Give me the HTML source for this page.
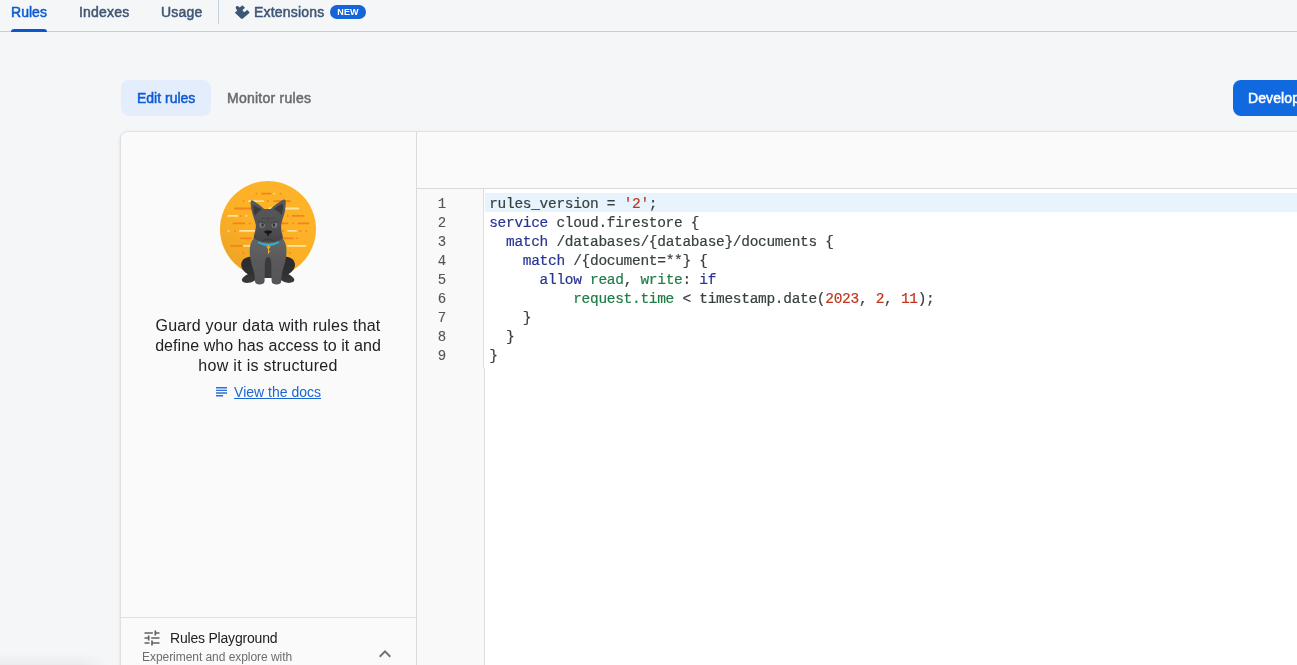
<!DOCTYPE html>
<html>
<head>
<meta charset="utf-8">
<style>
*{box-sizing:border-box;margin:0;padding:0}
html,body{width:1297px;height:665px;overflow:hidden}
body{background:#f4f6f8;font-family:"Liberation Sans",sans-serif;position:relative;color:#202124}
.abs{position:absolute}
.tabbar{position:absolute;left:0;top:0;width:1297px;height:32px;border-bottom:1px solid #c2cfdd}
.tab{position:absolute;top:4px;font-size:14px;line-height:16px;color:#3f5675;white-space:nowrap;-webkit-text-stroke:0.5px currentColor;letter-spacing:.2px}
.tab.sel{color:#0d5bd3}
.ul{position:absolute;left:11px;top:29px;width:36px;height:3px;background:#0b57d0;border-radius:3px 3px 0 0}
.sep{position:absolute;left:218px;top:0;width:1px;height:24px;background:#c2cfdd}
.new{position:absolute;left:330px;top:5px;width:36px;height:14px;border-radius:7px;background:#1565d8;color:#fff;font-size:9px;line-height:14px;text-align:center;font-weight:bold;letter-spacing:.1px}
.btn1{position:absolute;left:121px;top:80px;width:90px;height:36px;border-radius:8px;background:#e4edfc}
.t14{position:absolute;font-size:14px;line-height:16px;white-space:nowrap;-webkit-text-stroke:0.5px currentColor;letter-spacing:.1px}
.dev{position:absolute;left:1233px;top:80px;width:80px;height:36px;border-radius:8px;background:#1169e0}
.panel{position:absolute;left:120px;top:131px;width:1200px;height:560px;background:#fafafa;border:1px solid #e0e0e0;border-radius:8px 0 0 0;box-shadow:0 1px 3px rgba(0,0,0,.12);overflow:hidden}
.left{position:absolute;left:0;top:0;width:296px;height:560px;border-right:1px solid #dbdbdb;background:#fafafa}
.toolbar{position:absolute;left:296px;top:0;width:910px;height:57px;border-bottom:1px solid #dadada;background:#fafafa}
.editor{position:absolute;left:296px;top:57px;width:910px;height:520px;background:#fff}
.gutter{position:absolute;left:0;top:0;width:67px;height:520px;border-right:1px solid #dedede;background:#f9f9f9}
.hl{position:absolute;left:68px;top:4px;width:850px;height:19px;background:#e7f3fd}
.ln{position:absolute;left:20.800px;width:10px;font-family:"Liberation Mono",monospace;font-size:14px;line-height:19px;color:#555;-webkit-text-stroke:0.1px currentColor}
.code{position:absolute;left:72.200px;top:6px;font-family:"Liberation Mono",monospace;font-size:14.500px;letter-spacing:-.3px;line-height:19px;white-space:pre;color:#37413e;-webkit-text-stroke:0.2px currentColor}
.k{color:#283593}.g{color:#1e7d45}.r{color:#c0341d}
.guard{position:absolute;left:0;top:184px;width:294px;text-align:center;font-size:16px;line-height:20px;color:#202124;letter-spacing:.2px}
.docs{position:absolute;left:113.100px;top:252.400px;font-size:14px;line-height:16px;color:#1a67d2;text-decoration:underline;white-space:nowrap}
.pg{position:absolute;left:0;top:485px;width:295px;height:80px;border-top:1px solid #e0e0e0}
</style>
</head>
<body><div id="root" style="position:absolute;left:0;top:0;width:1297px;height:665px;will-change:transform">
<div class="tabbar">
  <div class="tab sel" style="left:11.100px;letter-spacing:0">Rules</div>
  <div class="tab" style="left:79px">Indexes</div>
  <div class="tab" style="left:161px">Usage</div>
  <div class="sep"></div>
  <div class="tab" style="left:254px">Extensions</div>
  <div class="new">NEW</div>
  <div class="ul"></div>
</div>
<div class="btn1"></div>
<div class="t14" style="left:137px;top:90px;color:#0e5cd3;letter-spacing:0">Edit rules</div>
<div class="t14" style="left:227px;top:90px;color:#6a6a6c;letter-spacing:.25px">Monitor rules</div>
<div class="dev"></div>
<div class="t14" style="left:1248px;top:90px;color:#fff">Develop</div>

<div class="panel">
  <div class="left">
    <div class="guard">Guard your data with rules that<br><span style="letter-spacing:.08px">define who has access to it and</span><br><span style="letter-spacing:.3px">how it is structured</span></div>
    <div class="docs">View the docs</div>
    <div class="pg">
      <div class="abs" style="left:49px;top:12px;font-size:14px;line-height:16px;color:#202124;white-space:nowrap;letter-spacing:-.2px">Rules Playground</div>
      <div class="abs" style="left:21px;top:32px;font-size:12px;line-height:14px;color:#6b6e72;white-space:nowrap;letter-spacing:-.05px">Experiment and explore with</div>
    </div>
  </div>
  <div class="toolbar"></div>
  <div class="editor">
    <div class="gutter" style="height:179px"></div><div class="gutter" style="top:179px;width:68px;height:400px"></div>
    <div class="hl"></div>
    <div class="ln" style="top:5.900px">1<br>2<br>3<br>4<br>5<br>6<br>7<br>8<br>9</div>
<div class="code">rules_version = <span class="r">'2'</span>;
<span class="k">service</span> cloud.firestore {
  <span class="k">match</span> /databases/{database}/documents {
    <span class="k">match</span> /{document=**} {
      <span class="k">allow</span> <span class="g">read</span>, <span class="g">write</span>: <span class="k">if</span>
          <span class="g">request.time</span> &lt; timestamp.date(<span class="r">2023</span>, <span class="r">2</span>, <span class="r">11</span>);
    }
  }
}</div>
  </div>
</div>
<!--ICONS-->
<svg class="abs" style="left:228px;top:0" width="30" height="24" viewBox="228 0 30 24"><path d="M235.040 12.450L237.200 10.470L236.100 8.840C235.500 7.900 235.600 7.000 236.300 6.400C237.000 5.700 238.000 5.800 238.700 6.500L239.550 7.400L241.900 5.700C242.200 5.400 242.600 5.400 242.900 5.700L244.600 7.300C244.900 7.600 244.900 7.900 244.600 8.200L243.300 9.300C242.600 10.000 242.600 10.700 243.100 11.300C243.700 12.000 244.600 12.100 245.300 11.550L246.700 10.300C247.000 10.000 247.300 10.000 247.600 10.300L249.300 12.000C249.600 12.300 249.600 12.600 249.300 12.900L243.200 18.200C242.400 18.900 241.400 18.900 240.700 18.200L235.100 13.100C234.900 12.900 234.900 12.600 235.040 12.450Z" fill="#3d5777"/></svg>
<svg class="abs" style="left:214px;top:385px" width="16" height="14" viewBox="214 385 16 14"><path d="M216 387.750h11M216 390.400h11M216 393.050h11M216 395.700h7" stroke="#2f6fd6" stroke-width="1.400" fill="none"/></svg>
<svg class="abs" style="left:142.400px;top:628.300px" width="20" height="20" viewBox="0 0 24 24"><path d="M3 17v2h6v-2H3zM3 5v2h10V5H3zm10 16v-2h8v-2h-8v-2h-2v6h2zM7 9v2H3v2h4v2h2V9H7zm14 4v-2H11v2h10zm-6-4h2V7h4V5h-4V3h-2v6z" fill="#616161"/></svg>
<svg class="abs" style="left:373.150px;top:641.800px" width="24" height="24" viewBox="0 0 24 24"><path d="M12 8l-6 6 1.410 1.410L12 10.830l4.590 4.580L18 14z" fill="#707070"/></svg>
<div class="abs" style="left:0;top:653px;width:108px;height:12px;background:linear-gradient(to bottom,rgba(0,0,0,0),rgba(0,0,0,.04));-webkit-mask-image:linear-gradient(to right,#000 75%,transparent);mask-image:linear-gradient(to right,#000 75%,transparent)"></div>
<!--/ICONS-->
<!--DOG-->
<svg class="abs" style="left:200px;top:170px" width="140" height="130" viewBox="200 170 140 130">
<defs>
<linearGradient id="cg" x1="0.8" y1="0.1" x2="0.25" y2="0.95"><stop offset="0" stop-color="#fdb327"/><stop offset="0.55" stop-color="#fcb026"/><stop offset="1" stop-color="#eea425"/></linearGradient>
<linearGradient id="bg1" x1="0" y1="0" x2="0" y2="1"><stop offset="0" stop-color="#656567"/><stop offset="0.45" stop-color="#5a5a5c"/><stop offset="1" stop-color="#555557"/></linearGradient>
<clipPath id="cc"><circle cx="268" cy="229" r="48"/></clipPath>
<linearGradient id="hg" x1="0" y1="0" x2="0" y2="1"><stop offset="0" stop-color="#59595b"/><stop offset="0.6" stop-color="#525254"/><stop offset="1" stop-color="#454547"/></linearGradient>
</defs>
<circle cx="268" cy="229" r="48" fill="url(#cg)"/>
<g clip-path="url(#cc)" stroke-width="1.800" stroke-linecap="round" fill="none">
<g stroke="#f6821f">
<path d="M256.3 193.6h.01M262 193.6h8.5M280.5 193.6h.01"/>
<path d="M243.6 201.1h.01M267.8 201.1h.01M274 201.1h16"/>
<path d="M235 208.5h20"/>
<path d="M240.6 215.9h.01M287.8 215.9h.01M292.7 215.9h11"/>
<path d="M233.5 223.4h11M250 223.4h.01M278 223.4h9.5M293.2 223.4h.01M298.5 223.4h10"/>
<path d="M235 230.9h.01M283 230.9h.01M300.3 230.9h.01M306.4 230.9h.01"/>
<path d="M241 238.3h10M283 238.3h10M297 238.3h.01"/>
<path d="M231.2 245.8h10.5"/>
<path d="M243.3 253h.01M289.8 253h.01"/>
</g>
<g stroke="#fde3a0">
<path d="M274.4 193.6h.01"/>
<path d="M248.8 201.1h14.5"/>
<path d="M269.500 208.5h29"/>
<path d="M228.3 215.9h9M246.5 215.9h.01"/>
<path d="M228.5 230.9h.01M240 230.9h18M288 230.9h8"/>
<path d="M244 245.8h8M288 245.8h17.5"/>
</g>
</g>
<!-- back haunches -->
<defs><linearGradient id="hh" x1="0" y1="0" x2="0" y2="1"><stop offset="0" stop-color="#2c2c2e"/><stop offset="0.6" stop-color="#303032"/><stop offset="1" stop-color="#39393b"/></linearGradient></defs>
<path id="hl" d="M256 257.500C250 255.500 242.500 257 241.300 263.500C240.500 268 244 272 247.800 274.200C245 275.500 242.500 277.500 241.900 279.600C241.500 282 245 283.200 248.700 282.800C252 282.300 255 280.500 257 278.500L258 258Z" fill="url(#hh)"/>
<path d="M256 257.500C250 255.500 242.500 257 241.300 263.500C240.500 268 244 272 247.800 274.200C245 275.500 242.500 277.500 241.900 279.600C241.500 282 245 283.200 248.700 282.800C252 282.300 255 280.500 257 278.500L258 258Z" fill="url(#hh)" transform="translate(536.200,0) scale(-1,1)"/>
<!-- inner dark between legs -->
<path d="M262 256h12v22h-12z" fill="#3a3a3c"/>
<!-- body -->
<path d="M254 238c-3 3-4.500 8-4.300 14 .3 8 3 15 4.500 21 .8 3.500 .5 6 .8 8.500 .3 2.200 2 2.900 4.500 2.900s4.800-.6 5-2.900c.3-4 .2-9 .3-14.500 .1-5 .4-10 3.300-10s3.200 5 3.300 10c.1 5.500 0 10.500 .3 14.500 .2 2.300 2.500 2.900 5 2.900s4.200-.7 4.500-2.900c.3-2.500 0-5 .8-8.500 1.500-6 4.200-13 4.500-21 .2-6-1.300-11-4.300-14z" fill="url(#bg1)"/>
<!-- head -->
<path d="M252.600 200.500C251.600 199.900 250.700 200.600 250.600 202.500C250.400 206 251.500 210.500 252.500 213.800C253.200 216 253.900 218 254.400 219.800C255.200 222.500 256 224.800 255.900 226.600C255.800 228.800 255.200 230.800 254.800 232.600C254.300 234.500 253.800 236.300 253.600 237.900C256.500 240.800 262 242.200 268.300 242.200C274.600 242.200 280.100 240.800 283 237.900C282.800 236.300 282.300 234.500 281.800 232.600C281.400 230.800 281 228.500 281.100 226C281.200 224 282.200 220.500 283.300 216.800C284.400 213.500 285.200 211 285.400 207.500C285.600 205 285.900 203 285.700 201.500C285.600 199.900 284.600 199 283.500 199.600C279 202 274.500 205.500 270.600 208.900L264.200 208.900C260.500 205.800 256.500 202.800 252.600 200.500Z" fill="url(#hg)"/>
<!-- ears inner -->
<path d="M253.300 205.200c2.800 1.200 6 2.800 8.600 4.500 -3 1.600-5.600 3.700-7.100 6 -1-3.500-1.700-7-1.500-10.500z" fill="#3a3a3c"/>
<path d="M282.800 203.600c-3.200 1.500-6.300 3.500-8.900 5.700 3.200 1.400 6.200 3.300 7.900 5.600 1-3.500 1.600-7.500 1-11.300z" fill="#3a3a3c"/>
<!-- brows -->
<g stroke="#404042" stroke-width=".7" fill="none" stroke-linecap="round">
<path d="M261.500 218.300h13.200M268.200 218.300v4"/>
<path d="M259 221.300l6.200 1.700M277.600 221.300l-6.200 1.700" stroke-width="1.300" stroke="#48484a"/>
</g>
<!-- eyes -->
<g>
<rect x="259.400" y="222.300" width="5.600" height="5.400" rx="2" fill="#79797b"/>
<rect x="271.600" y="222.300" width="5.600" height="5.400" rx="2" fill="#79797b"/>
<ellipse cx="262.600" cy="225" rx="1.100" ry="1.700" fill="#2a2a2c"/>
<ellipse cx="273.900" cy="225" rx="1.100" ry="1.700" fill="#2a2a2c"/>
</g>
<g fill="none" stroke-linecap="round"><path d="M259 221.300l6.200 1.700M277.600 221.300l-6.200 1.700" stroke-width="1.300" stroke="#48484a"/></g>
<!-- nose -->
<path d="M264.200 232c0-1.200 1.800-1.500 3.900-1.500s3.900 .3 3.900 1.500c0 .9-1.500 1.500-3 1.800v2.200h-1.600v-2.200c-1.600-.3-3.200-.9-3.200-1.800z" fill="#151517"/>
<!-- mouth -->
<path d="M262.500 241c1.800-1.200 3.700-1.800 5.600-1.800s3.900 .6 5.700 1.800" stroke="#3a3a3c" stroke-width="1.200" opacity=".7" fill="none" stroke-linecap="round"/>
<!-- collar -->
<path d="M258.200 241.200c2.500 1.600 6 2.500 10 2.500s8-.9 10.600-2.500l.4 1.600c-2.800 2-6.500 3.200-11 3.200s-7.800-1.200-10.400-3.200z" fill="#27b5d2"/>
<!-- key -->
<path d="M267 246.600l1.500 2.200 1.500-2.200M268.500 245.200v8M268.500 251.500h1.300" stroke="#f4a828" stroke-width="1.100" fill="none" stroke-linecap="round"/>
</svg>
<!--/DOG-->
</div></body>
</html>
